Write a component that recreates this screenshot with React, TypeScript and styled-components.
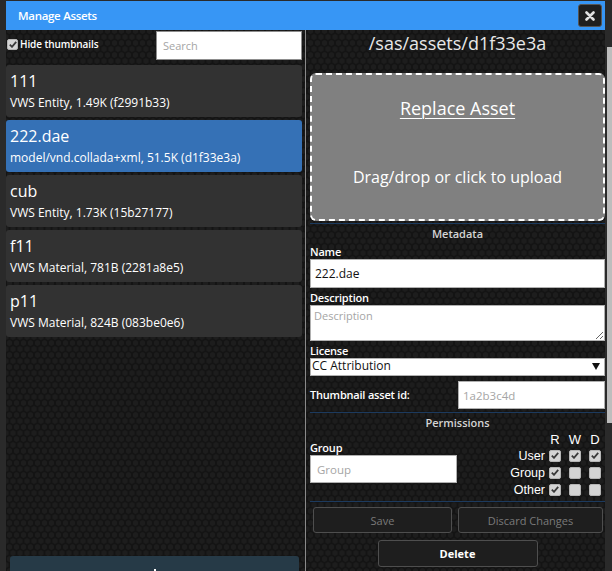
import React from "react";
import styled, { createGlobalStyle, css } from "styled-components";

const GlobalStyle = createGlobalStyle`
  html, body { margin: 0; padding: 0; background: #2a2a2a; overflow: hidden; }
  body { font-family: "Open Sans", "DejaVu Sans", sans-serif; }
  * { box-sizing: border-box; }
`;

const hexPattern = css`
  background-color: #141414;
  background-image: radial-gradient(circle, #1d1d1d 0 2.4px, transparent 3px),
    radial-gradient(circle, #1d1d1d 0 2.4px, transparent 3px);
  background-size: 7px 12px;
  background-position: 0 0, 3.5px 6px;
`;

const Screen = styled.div`
  display: flex;
  height: 571px;
  overflow: hidden;
`;

const Dialog = styled.div`
  width: 599px;
  height: 600px;
  margin: 1px 0 0 6px;
  display: flex;
  flex-direction: column;
  ${hexPattern}
`;

const ScrollTrack = styled.div`
  width: 7px;
  padding: 47px 0 0 2px;
  display: flex;
  flex-direction: column;
`;

const ScrollThumb = styled.div`
  height: 376px;
  background: #bdbdbd;
`;

const TitleBar = styled.div`
  height: 29px;
  background: #3796f5;
  display: flex;
  align-items: center;
  justify-content: space-between;
  padding: 0 3px 0 12px;
`;

const Title = styled.div`
  color: #fff;
  font-size: 11.5px;
  font-weight: 600;
  letter-spacing: -0.3px;
`;

const CloseButton = styled.button`
  width: 24px;
  height: 23px;
  padding: 0;
  display: flex;
  align-items: center;
  justify-content: center;
  background: #1f1f1f;
  border: 1px solid #555;
  border-radius: 3px;
`;

const Body = styled.div`
  flex: 1;
  display: flex;
  min-height: 0;
`;

const LeftPanel = styled.div`
  width: 300px;
  padding-right: 3px;
  border-right: 1px solid #8a8a8a;
  display: flex;
  flex-direction: column;
`;

const TopRow = styled.div`
  height: 29px;
  margin-top: 1px;
  display: flex;
  align-items: center;
  justify-content: space-between;
`;

const CheckLabel = styled.label`
  display: flex;
  align-items: center;
  gap: 2px;
  margin-left: 1px;
  align-self: flex-start;
  margin-top: 6px;
  color: #fff;
  font-size: 10px;
  font-weight: 600;
  letter-spacing: -0.1px;
`;

const Box = styled.span<{ $size: number }>`
  width: ${(p) => p.$size}px;
  height: ${(p) => p.$size}px;
  display: inline-flex;
  align-items: center;
  justify-content: center;
  background: #d4d4d4;
  border: 1px solid #b4b4b4;
  border-radius: 2px;
`;

const SearchInput = styled.input`
  width: 146px;
  height: 29px;
  border: 1px solid #8d8d8d;
  background: #fff;
  padding: 0 6px;
  font-family: "Open Sans", sans-serif;
  font-size: 11px;
  &::placeholder { color: #a5a5a5; }
`;

const AssetList = styled.div`
  margin-top: 5px;
  display: flex;
  flex-direction: column;
  gap: 3px;
`;

const AssetItem = styled.div<{ $selected?: boolean }>`
  height: 52px;
  padding: 5px 4px 0;
  border-radius: 3px;
  background: ${(p) => (p.$selected ? "#3571b6" : "#323232")};
  color: #fff;
`;

const AssetName = styled.div`
  font-size: 16px;
  line-height: 22px;
`;

const AssetInfo = styled.div`
  margin-top: 3px;
  font-size: 12px;
  line-height: 16px;
`;

const UploadButton = styled.div`
  margin: auto 3px 15px 4px;
  height: 30px;
  border-radius: 3px;
  background: #263a47;
  display: flex;
  justify-content: center;
  padding-top: 13px;
`;

const RightPanel = styled.div`
  flex: 1;
  padding-left: 4px;
  display: flex;
  flex-direction: column;
`;

const PathTitle = styled.div`
  padding-top: 1px;
  font-size: 18px;
  line-height: 24px;
  color: #e8e8e8;
  text-align: center;
`;

const DropZone = styled.div`
  margin-top: 18px;
  height: 148px;
  padding-top: 21px;
  border: 2px dashed #fff;
  border-radius: 6px;
  background: #808080;
  color: #fff;
  display: flex;
  flex-direction: column;
  align-items: center;
`;

const ReplaceLink = styled.div`
  font-size: 18px;
  line-height: 24px;
  text-decoration: underline;
  text-underline-offset: 3px;
  text-decoration-thickness: 1px;
`;

const DropHint = styled.div`
  margin-top: 46px;
  font-size: 16px;
  line-height: 22px;
`;

const Rule = styled.div<{ $gap: number }>`
  margin-top: ${(p) => p.$gap}px;
  border-top: 1px solid #1c3a5e;
`;

const SectionHeading = styled.div`
  padding-top: 1px;
  font-size: 11px;
  line-height: 17px;
  font-weight: 600;
  color: #d4d4d4;
  text-align: center;
`;

const FieldLabel = styled.div`
  margin-top: 3px;
  font-size: 11px;
  line-height: 14px;
  font-weight: 600;
  letter-spacing: -0.2px;
  color: #fff;
`;

const TextInput = styled.input<{ $width?: number; $height?: number }>`
  width: ${(p) => (p.$width ? `${p.$width}px` : "100%")};
  height: ${(p) => p.$height ?? 29}px;
  border: 1px solid #b0b0b0;
  background: #fff;
  padding: 0 4px;
  font-family: "Open Sans", sans-serif;
  font-size: 12px;
  color: #111;
  &::placeholder { color: #a5a5a5; font-size: 11.5px; }
`;

const TextArea = styled.textarea`
  width: 100%;
  height: 36px;
  display: block;
  border: 1px solid #b0b0b0;
  background: #fff;
  padding: 2px 3px;
  resize: vertical;
  font-family: "Open Sans", sans-serif;
  font-size: 11px;
  &::placeholder { color: #a5a5a5; }
`;

const SelectWrap = styled.div`
  position: relative;
  height: 18px;
`;

const Select = styled.select`
  appearance: none;
  display: block;
  width: 100%;
  height: 18px;
  border: 1px solid #b0b0b0;
  background: #fff;
  padding: 0 0 2px 1px;
  line-height: 14px;
  font-family: "Open Sans", sans-serif;
  font-size: 12px;
  color: #111;
`;

const SelectArrow = styled.span`
  position: absolute;
  right: 5px;
  top: 5px;
  width: 0;
  height: 0;
  border-left: 4px solid transparent;
  border-right: 4px solid transparent;
  border-top: 7px solid #111;
  pointer-events: none;
`;

const ThumbRow = styled.div`
  margin-top: 5px;
  display: flex;
  align-items: center;
  justify-content: space-between;
`;

const InlineLabel = styled(FieldLabel)`
  margin-top: 0;
`;

const PermRow = styled.div`
  display: flex;
  justify-content: space-between;
`;

const GroupCol = styled.div`
  width: 147px;
  padding-top: 10px;
  display: flex;
  flex-direction: column;
`;

const GroupLabel = styled(FieldLabel)`
  margin: 0;
`;

const PermGrid = styled.div`
  display: grid;
  grid-template-columns: auto 20px 20px 20px;
  grid-auto-rows: 17px;
  grid-template-rows: 16px;
  align-items: center;
  font-family: "Liberation Sans", Arial, sans-serif;
  font-size: 12.5px;
  color: #fff;
`;

const PermHead = styled.span`
  font-size: 13px;
  text-align: center;
`;

const PermName = styled.span`
  text-align: right;
`;

const PermCell = styled.span`
  display: flex;
  justify-content: center;
`;

const ButtonRow = styled.div`
  margin-top: 5px;
  padding-left: 3px;
  display: grid;
  grid-template-columns: 139px 145px;
  gap: 6px;
`;

const ActionButton = styled.button<{ $primary?: boolean }>`
  height: ${(p) => (p.$primary ? 27 : 26)}px;
  width: ${(p) => (p.$primary ? "160px" : "auto")};
  align-self: ${(p) => (p.$primary ? "center" : "auto")};
  margin-top: ${(p) => (p.$primary ? "7px" : "0")};
  background: #1e1e1e;
  border: 1px solid #4e4e4e;
  border-radius: 3px;
  font-family: "Open Sans", sans-serif;
  font-size: 11px;
  font-weight: ${(p) => (p.$primary ? 700 : 400)};
  color: ${(p) => (p.$primary ? "#fff" : "#7a7a7a")};
`;

const CheckMark = () => (
  <svg width="8" height="7" viewBox="0 0 8 7">
    <path d="M0.8 3.6 L3 5.8 L7.2 0.9" fill="none" stroke="#3a3a3a" strokeWidth="1.8" />
  </svg>
);

const Check = ({ on, size = 12 }: { on: boolean; size?: number }) => (
  <Box $size={size}>{on && <CheckMark />}</Box>
);

const assets = [
  { name: "111", info: "VWS Entity, 1.49K (f2991b33)" },
  { name: "222.dae", info: "model/vnd.collada+xml, 51.5K (d1f33e3a)", selected: true },
  { name: "cub", info: "VWS Entity, 1.73K (15b27177)" },
  { name: "f11", info: "VWS Material, 781B (2281a8e5)" },
  { name: "p11", info: "VWS Material, 824B (083be0e6)" },
];

const perms: [string, boolean[]][] = [
  ["User", [true, true, true]],
  ["Group", [true, false, false]],
  ["Other", [true, false, false]],
];

export default function App() {
  return (
    <Screen>
      <GlobalStyle />
      <Dialog>
        <TitleBar>
          <Title>Manage Assets</Title>
          <CloseButton aria-label="Close">
            <svg width="10" height="10" viewBox="0 0 10 10">
              <path d="M1.5 1.5 L8.5 8.5 M8.5 1.5 L1.5 8.5" stroke="#e2e2e2" strokeWidth="2.6" strokeLinecap="round" />
            </svg>
          </CloseButton>
        </TitleBar>
        <Body>
          <LeftPanel>
            <TopRow>
              <CheckLabel>
                <Check on size={11} />
                Hide thumbnails
              </CheckLabel>
              <SearchInput placeholder="Search" />
            </TopRow>
            <AssetList>
              {assets.map((a) => (
                <AssetItem key={a.name} $selected={a.selected}>
                  <AssetName>{a.name}</AssetName>
                  <AssetInfo>{a.info}</AssetInfo>
                </AssetItem>
              ))}
            </AssetList>
            <UploadButton>
              <svg width="12" height="12" viewBox="0 0 12 12">
                <path d="M6 0 V12 M0 6 H12" stroke="#fff" strokeWidth="2" />
              </svg>
            </UploadButton>
          </LeftPanel>
          <RightPanel>
            <PathTitle>/sas/assets/d1f33e3a</PathTitle>
            <DropZone>
              <ReplaceLink>Replace Asset</ReplaceLink>
              <DropHint>Drag/drop or click to upload</DropHint>
            </DropZone>
            <Rule $gap={2} />
            <SectionHeading>Metadata</SectionHeading>
            <FieldLabel>Name</FieldLabel>
            <TextInput defaultValue="222.dae" />
            <FieldLabel>Description</FieldLabel>
            <TextArea placeholder="Description" />
            <FieldLabel>License</FieldLabel>
            <SelectWrap>
              <Select defaultValue="cc-by">
                <option value="cc-by">CC Attribution</option>
              </Select>
              <SelectArrow />
            </SelectWrap>
            <ThumbRow>
              <InlineLabel>Thumbnail asset id:</InlineLabel>
              <TextInput $width={147} $height={28} placeholder="1a2b3c4d" />
            </ThumbRow>
            <Rule $gap={3} />
            <SectionHeading>Permissions</SectionHeading>
            <PermRow>
              <GroupCol>
                <GroupLabel>Group</GroupLabel>
                <TextInput $height={28} placeholder="Group" style={{ paddingLeft: 6 }} />
              </GroupCol>
              <PermGrid>
                <span />
                <PermHead>R</PermHead>
                <PermHead>W</PermHead>
                <PermHead>D</PermHead>
                {perms.map(([who, flags]) => (
                  <React.Fragment key={who}>
                    <PermName>{who}</PermName>
                    {flags.map((f, i) => (
                      <PermCell key={i}>
                        <Check on={f} />
                      </PermCell>
                    ))}
                  </React.Fragment>
                ))}
              </PermGrid>
            </PermRow>
            <Rule $gap={3} />
            <ButtonRow>
              <ActionButton>Save</ActionButton>
              <ActionButton>Discard Changes</ActionButton>
            </ButtonRow>
            <ActionButton $primary>Delete</ActionButton>
          </RightPanel>
        </Body>
      </Dialog>
      <ScrollTrack>
        <ScrollThumb />
      </ScrollTrack>
    </Screen>
  );
}
